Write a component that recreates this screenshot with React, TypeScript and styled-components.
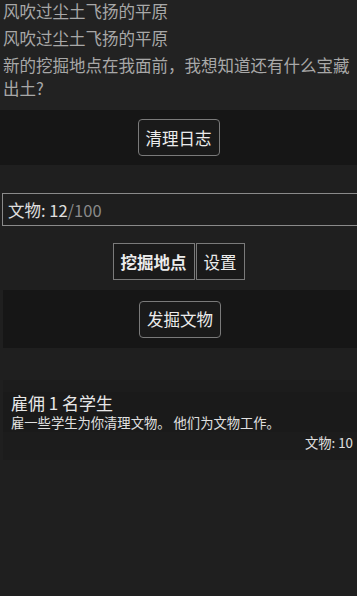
import React from "react"
import styled, { createGlobalStyle } from "styled-components"

const GlobalStyle = createGlobalStyle`
    html, body {
        margin: 0;
        padding: 0;
        background: #1f1f1f;
        font-family: "Noto Sans CJK SC", "Noto Sans", sans-serif;
        color: #e6e6e6;
    }
`

// the log is scrolled to the bottom, older lines slide out at the top
const logLines = [
    "风吹过尘土飞扬的平原",
    "风吹过尘土飞扬的平原",
    "风吹过尘土飞扬的平原",
    "新的挖掘地点在我面前，我想知道还有什么宝藏出土?",
]

const App = () => {
    return (
        <Page>
            <GlobalStyle />
            <LogPanel>
                {logLines.map((x, i) => <LogLine key={i}>{x}</LogLine>)}
            </LogPanel>
            <ActionBand>
                <RoundButton>清理日志</RoundButton>
            </ActionBand>
            <Counter>
                文物: 12<Max>/100</Max>
            </Counter>
            <Tabs>
                <Tab $active>挖掘地点</Tab>
                <Tab>设置</Tab>
            </Tabs>
            <ActionBand $inset>
                <RoundButton>发掘文物</RoundButton>
            </ActionBand>
            <UpgradeArea>
                <UpgradeBody>
                    <UpgradeTitle>雇佣 1 名学生</UpgradeTitle>
                    <UpgradeDesc>雇一些学生为你清理文物。 他们为文物工作。</UpgradeDesc>
                </UpgradeBody>
                <UpgradeCost>文物: 10</UpgradeCost>
            </UpgradeArea>
        </Page>
    )
}

export default App

const Page = styled.div`
    width: 357px;
    min-height: 596px;
    overflow: hidden;
    display: flex;
    flex-direction: column;
`

const LogPanel = styled.div`
    height: 110px;
    box-sizing: border-box;
    background: #222222;
    overflow: hidden;
    display: flex;
    flex-direction: column;
    justify-content: flex-end;
    padding: 0 3px 10px 3px;
`

const LogLine = styled.p`
    margin: 4px 0 0 0;
    font-size: 16.5px;
    line-height: 23px;
    color: #a8a8a8;
`

const ActionBand = styled.div<{ $inset?: boolean }>`
    background: #161616;
    display: flex;
    justify-content: center;
    align-items: center;
    height: ${p => p.$inset ? '58px' : '55px'};
    margin-left: ${p => p.$inset ? '3px' : '0'};
    margin-top: ${p => p.$inset ? '10px' : '0'};
`

const RoundButton = styled.button`
    height: 37px;
    padding: 0 7px;
    background: #1a1a1a;
    border: 1px solid #7a7a7a;
    border-radius: 4px;
    color: #ececec;
    font-family: inherit;
    font-size: 16.5px;
`

const Counter = styled.div`
    margin: 28px 0 0 2px;
    width: 380px;
    height: 33px;
    box-sizing: border-box;
    border: 1px solid #8a8a8a;
    background: #1e1e1e;
    display: flex;
    align-items: center;
    padding-left: 5px;
    font-size: 16.5px;
    color: #e0e0e0;
`

const Max = styled.span`
    color: #8a8a8a;
`

const Tabs = styled.div`
    display: flex;
    justify-content: center;
    margin-top: 17px;
`

const Tab = styled.button<{ $active?: boolean }>`
    height: 37px;
    padding: 0 7px;
    background: #1a1a1a;
    border: 1px solid #7a7a7a;
    border-radius: 0;
    color: #ececec;
    font-family: inherit;
    font-size: 16.5px;
    font-weight: ${p => p.$active ? 700 : 400};
    & + & {
        margin-left: 1px;
    }
`

const UpgradeArea = styled.div`
    margin: 32px 0 0 3px;
    padding-top: 12px;
    height: 80px;
    box-sizing: border-box;
    background: #1c1c1c;
`

const UpgradeBody = styled.div`
    background: #1a1a1a;
    padding: 0 8px;
`

const UpgradeTitle = styled.div`
    font-size: 17px;
    line-height: 22px;
    color: #e8e8e8;
`

const UpgradeDesc = styled.div`
    font-size: 13.3px;
    line-height: 18px;
    color: #e0e0e0;
`

const UpgradeCost = styled.div`
    text-align: right;
    font-size: 13.3px;
    line-height: 22px;
    padding-right: 4px;
    color: #e0e0e0;
`
